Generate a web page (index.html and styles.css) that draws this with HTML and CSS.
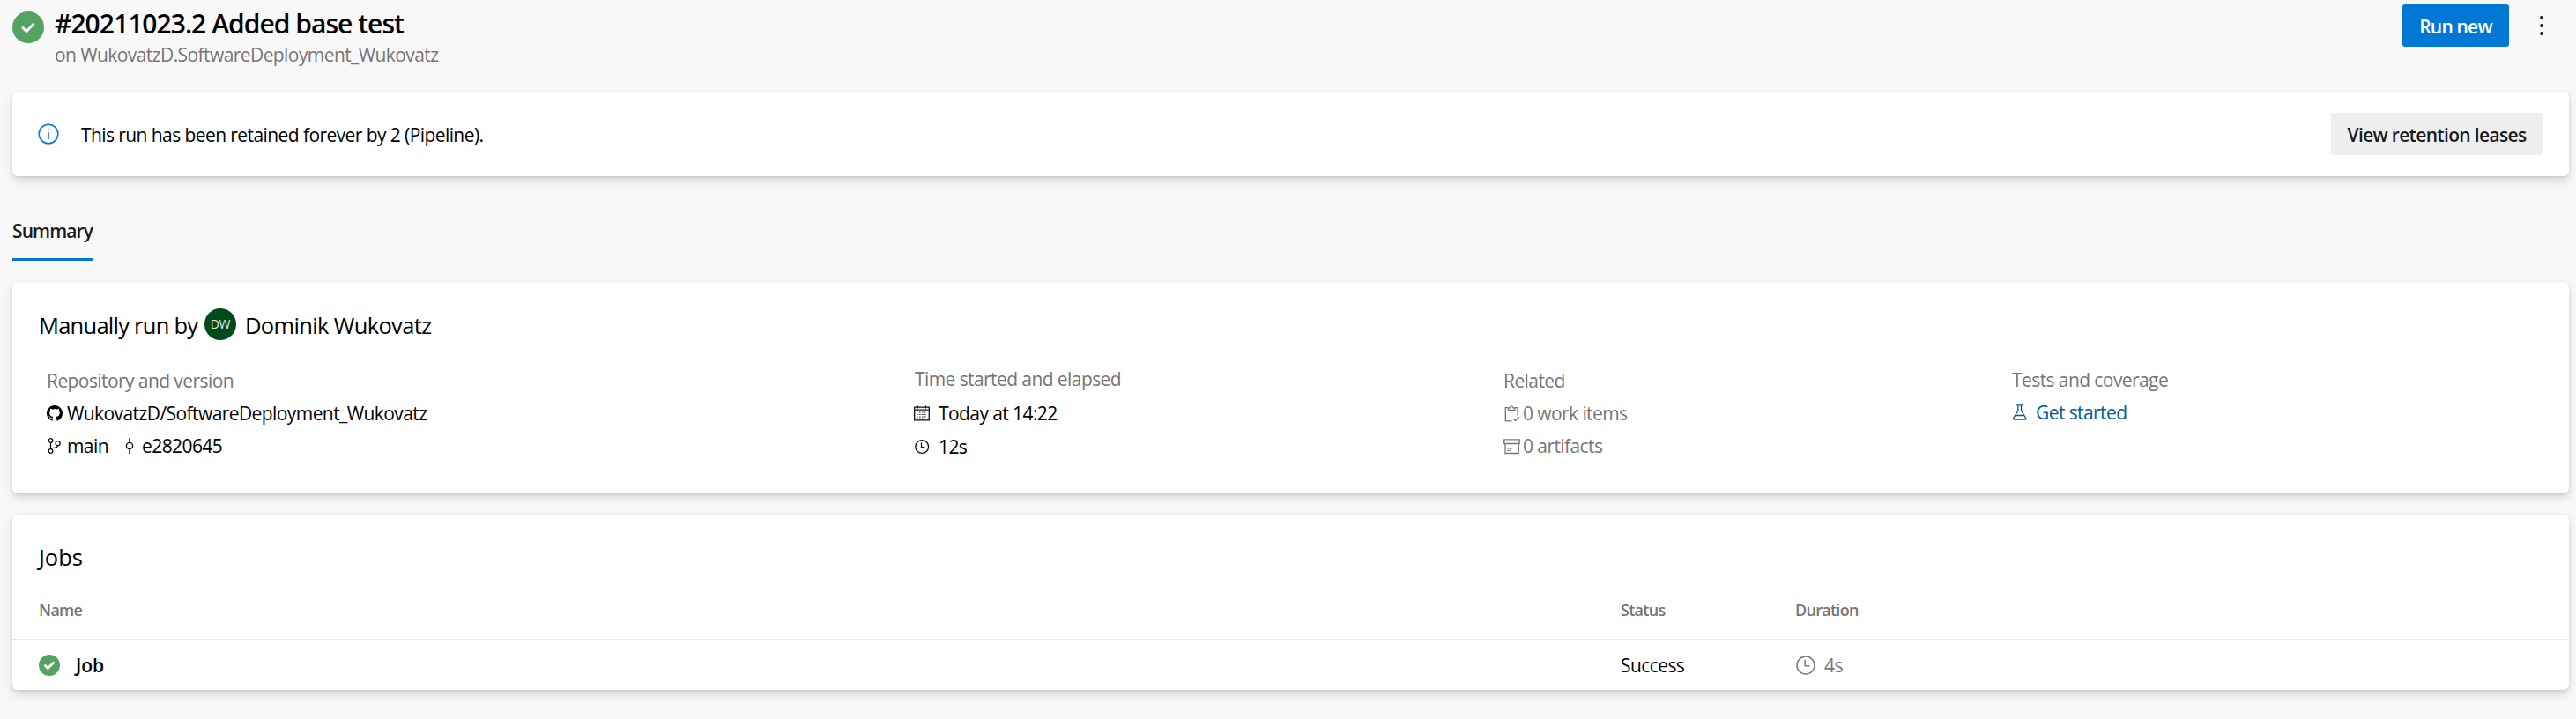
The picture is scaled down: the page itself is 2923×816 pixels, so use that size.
FILE: index.html
```html
<!DOCTYPE html>
<html lang="en">
<head>
<meta charset="utf-8">
<title>#20211023.2 Added base test</title>
<link rel="stylesheet" href="styles.css">
</head>
<body>
<header class="header">
  <svg class="status-lg" viewBox="0 0 24 24"><circle cx="12" cy="12" r="12" fill="#55a362"/><path d="M8 12.4l2.7 2.6 5.2-5.3" fill="none" stroke="#fff" stroke-width="1.9" stroke-linecap="round" stroke-linejoin="round"/></svg>
  <div class="heading">
    <h1 class="title">#20211023.2 Added base test</h1>
    <div class="subtitle">on WukovatzD.SoftwareDeployment_Wukovatz</div>
  </div>
  <button class="btn btn-primary">Run new</button>
  <svg class="more" viewBox="0 0 4 22" fill="#1b1b1b"><circle cx="2" cy="2" r="1.9"/><circle cx="2" cy="11" r="1.9"/><circle cx="2" cy="20" r="1.9"/></svg>
</header>

<section class="card banner">
  <svg class="info" viewBox="0 0 24 24"><circle cx="12" cy="12" r="10.8" fill="none" stroke="#0078d4" stroke-width="1.5"/><path d="M12 10.3v7.4M12 6.2v1.8" stroke="#0078d4" stroke-width="1.6"/></svg>
  <span class="banner-text">This run has been retained forever by 2 (Pipeline).</span>
  <button class="btn btn-leases">View retention leases</button>
</section>

<nav class="tabs"><span class="tab">Summary</span></nav>

<section class="card summary">
  <h2 class="run-by"><span class="run-label">Manually run by</span><span class="avatar">DW</span><span>Dominik Wukovatz</span></h2>
  <div class="details">
    <div class="col">
      <div class="label">Repository and version</div>
      <div class="row">
        <svg class="i18" viewBox="0 0 16 16"><path fill="#000" d="M8 0C3.58 0 0 3.58 0 8c0 3.54 2.29 6.53 5.47 7.59.4.07.55-.17.55-.38 0-.19-.01-.82-.01-1.49-2.01.37-2.53-.49-2.69-.94-.09-.23-.48-.94-.82-1.13-.28-.15-.68-.52-.01-.53.63-.01 1.08.58 1.23.82.72 1.21 1.87.87 2.33.66.07-.52.28-.87.51-1.07-1.78-.2-3.64-.89-3.64-3.95 0-.87.31-1.59.82-2.15-.08-.2-.36-1.02.08-2.12 0 0 .67-.21 2.2.82.64-.18 1.32-.27 2-.27s1.36.09 2 .27c1.53-1.04 2.2-.82 2.2-.82.44 1.1.16 1.92.08 2.12.51.56.82 1.27.82 2.15 0 3.07-1.87 3.75-3.65 3.95.29.25.54.73.54 1.48 0 1.07-.01 1.93-.01 2.2 0 .21.15.46.55.38A8.01 8.01 0 0 0 16 8c0-4.42-3.58-8-8-8z"/></svg>
        <span>WukovatzD/SoftwareDeployment_Wukovatz</span>
      </div>
      <div class="row">
        <svg class="i18" viewBox="0 0 18 18" fill="none" stroke="#111" stroke-width="1.3"><circle cx="4.5" cy="3" r="2.3"/><circle cx="12.6" cy="6.2" r="2.5"/><circle cx="4.5" cy="15" r="2.3"/><path d="M4.5 5.3v7.4M12.6 8.7c-.2 3.1-4.8 2.2-7.4 3.3"/></svg>
        <span class="branch">main</span>
        <svg class="commit" viewBox="0 0 10 18" fill="none" stroke="#111" stroke-width="1.4"><circle cx="5" cy="9" r="3.6"/><path d="M5 0v5.4M5 12.6V18"/></svg>
        <span>e2820645</span>
      </div>
    </div>
    <div class="col col-time">
      <div class="label">Time started and elapsed</div>
      <div class="row">
        <svg class="i18" viewBox="0 0 18 18" fill="none" stroke="#111"><path d="M.7 2.2h16.6v14.6H.7z" stroke-width="1.3"/><path d="M1 5.2h16" stroke="#555" stroke-width="1.8"/><path d="M4.5.5v3M13.5.5v3" stroke-width="1.2"/><path d="M6 8h8.5M3 10.5h11.5M3 13h11.5M3 15h8" stroke="#444" stroke-width="1.2" stroke-dasharray="1.7 1.3"/></svg>
        <span>Today at 14:22</span>
      </div>
      <div class="row">
        <svg class="i18" viewBox="0 0 18 18" fill="none" stroke="#111" stroke-width="1.3"><circle cx="9.2" cy="9" r="7.4"/><path d="M8.5 4.5V9.6h3.8"/></svg>
        <span>12s</span>
      </div>
    </div>
    <div class="col">
      <div class="label">Related</div>
      <div class="row muted">
        <svg class="i19" viewBox="0 0 19 19" fill="none" stroke="#777" stroke-width="1.3"><path d="M9.5 17.8H2.3V2.7h3M13 2.7h3v8.8M5.5 5.3V2.8h2C7.6.2 10.8.2 10.9 2.8h2v2.5zM11.3 15.3l2.2 2.2 4.3-4.3"/></svg>
        <span>0 work items</span>
      </div>
      <div class="row muted">
        <svg class="i19" viewBox="0 0 19 19" fill="none" stroke="#777" stroke-width="1.3"><path d="M.8 1.8h17.4v4.7H.8zM2 6.5v11h15.2v-11M4.3 11.8h5.8M4.3 14.3h3.6"/></svg>
        <span>0 artifacts</span>
      </div>
    </div>
    <div class="col col-tests">
      <div class="label">Tests and coverage</div>
      <div class="row link">
        <svg class="i18" viewBox="0 0 18 18" fill="none" stroke="#005a9e" stroke-width="1.3"><path d="M5.2.8h7M6.9 1v5.8L1.9 15.3c-.5 1 0 1.9 1 1.9h11.6c1 0 1.5-.9 1-1.9L10.5 6.8V1M4.2 12.5h9"/></svg>
        <span>Get started</span>
      </div>
    </div>
  </div>
</section>

<section class="card jobs">
  <h2 class="jobs-title">Jobs</h2>
  <div class="trow thead"><span>Name</span><span>Status</span><span>Duration</span></div>
  <div class="trow job">
    <span class="job-name"><svg class="status-sm" viewBox="0 0 24 24"><circle cx="12" cy="12" r="12" fill="#55a362"/><path d="M7.3 12.6l3 2.9 6.3-6.3" fill="none" stroke="#fff" stroke-width="2.8" stroke-linecap="round" stroke-linejoin="round"/></svg><b>Job</b></span>
    <span>Success</span>
    <span class="duration"><svg class="clock" viewBox="0 0 22 22" fill="none" stroke="#777" stroke-width="1.5"><circle cx="11" cy="11" r="10"/><path d="M10.2 5v6.8h5.2"/></svg>4s</span>
  </div>
</section>
</body>
</html>
```
FILE: styles.css
```css
* { box-sizing: border-box; }
body {
  margin: 0;
  height: 816px;
  padding: 0 8px 0 14px;
  background: #f8f8f8;
  color: #000;
  font: 21px/30px "Open Sans", "Noto Sans", sans-serif;
  letter-spacing: -0.58px;
  white-space: nowrap;
}
svg { display: block; flex: none; }
h1, h2 { margin: 0; font-weight: 400; }

.header { display: flex; align-items: flex-start; height: 104px; }
.status-lg { width: 36px; height: 36px; margin-top: 13px; }
.heading { flex: 1; padding: 7px 0 0 12px; }
.title { font-size: 30px; font-weight: 600; line-height: 40px; letter-spacing: -0.97px; }
.subtitle { color: #767676; }
.btn {
  height: 48px;
  padding: 2px 0 0;
  border: 0;
  border-radius: 3px;
  background: #efefef;
  color: #1b1b1b;
  font: inherit;
  font-weight: 600;
}
.btn-primary { width: 121px; margin-top: 5px; background: #0078d4; color: #fff; letter-spacing: -0.8px; }
.btn-leases { width: 240px; letter-spacing: -0.67px; }
.more { width: 4px; height: 22px; margin: 18px 29px 0 35px; }

.card {
  background: #fff;
  border-radius: 6px;
  box-shadow: 0 5px 11px rgba(0, 0, 0, .132), 0 1px 3px rgba(0, 0, 0, .108);
}
.banner { display: flex; align-items: center; height: 96px; padding: 0 30px 0 29px; }
.info { width: 24px; height: 24px; margin: 0 25px 1px 0; }
.banner-text { flex: 1; padding-top: 2px; }

.tabs { display: flex; height: 120px; padding-top: 47px; }
.tab { width: 91px; height: 49px; border-bottom: 3px solid #0078d4; color: #1b1b1b; font-weight: 600; letter-spacing: -0.92px; }

.summary { height: 240px; padding-top: 30px; }
.run-by { display: flex; padding-left: 30px; font-size: 25.5px; line-height: 36px; letter-spacing: -0.65px; }
.run-by > span:not(.avatar) { padding-top: 1px; }
.run-label { width: 188px; letter-spacing: -0.75px; }
.avatar {
  width: 36px;
  height: 36px;
  margin-right: 10px;
  border-radius: 50%;
  background: #004b1c;
  color: #dfe9e2;
  font-size: 14px;
  letter-spacing: -.2px;
  text-align: center;
}
.details { display: grid; grid-template-columns: 984px 669px 577px 1fr; padding: 30px 0 0 39px; }
.col { display: flex; flex-direction: column; gap: 7px; }
.col-time { gap: 8.5px; margin-top: -2px; }
.col-tests { margin-top: -1px; }
.label { color: #767676; }
.row { display: flex; height: 30px; }
.i18 { width: 18px; height: 18px; margin: 6px 5px 0 0; }
.i19 { width: 19px; height: 19px; margin: 6px 3px 0 0; }
.col-time .i18 { margin-right: 10px; }
.col-time .label { padding-left: 1px; }
.col-tests .i18 { margin-right: 9px; }
.commit { width: 10px; height: 18px; margin: 6px 9px 0 22px; }
.branch { width: 44px; }
.muted { color: #767676; }
.link { color: #005a9e; }

.jobs { margin-top: 24px; height: 199px; padding-top: 30px; }
.jobs-title { height: 62px; padding-left: 30px; font-size: 25.5px; line-height: 36px; letter-spacing: 0; }
.trow { display: grid; grid-template-columns: 1795px 198px 1fr; padding-left: 30px; }
.thead { height: 50px; padding-top: 1px; color: #767676; font-size: 18px; font-weight: 600; letter-spacing: -0.72px; border-bottom: 1px solid #eaeaea; }
.job { height: 57px; align-items: center; }
.job-name, .duration { display: flex; align-items: center; }
.job-name b { padding-left: 18px; font-weight: 600; letter-spacing: 0; }
.status-sm { width: 24px; height: 24px; }
.clock { width: 22px; height: 22px; margin: 0 10px 0 1px; }
.duration { color: #767676; }
```
